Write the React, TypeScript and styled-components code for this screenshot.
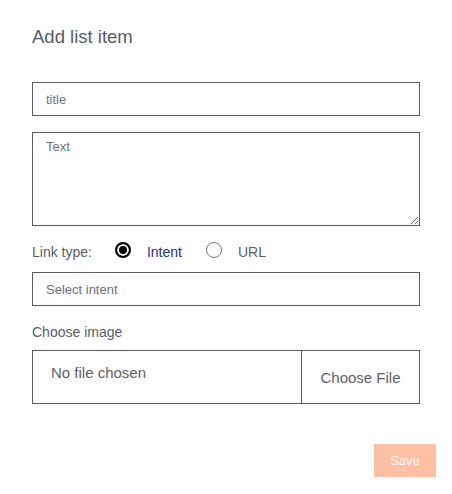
import React, { useState } from 'react';
import styled, { createGlobalStyle } from 'styled-components';

const GlobalStyle = createGlobalStyle`
  html, body {
    margin: 0;
    padding: 0;
    background: #ffffff;
    font-family: "Liberation Sans", Arial, sans-serif;
  }
  * {
    box-sizing: border-box;
  }
`;

const Page = styled.div`
  width: 452px;
  min-height: 494px;
  padding: 26px 16px 0 32px;
`;

const Form = styled.div`
  width: 388px;
  display: flex;
  flex-direction: column;
`;

const Title = styled.h2`
  margin: 0 0 34px;
  font-size: 18.5px;
  line-height: 22px;
  font-weight: 400;
  color: #575b66;
`;

const TextInput = styled.input`
  width: 100%;
  height: 34px;
  padding: 0 13px;
  border: 1px solid #5a5d66;
  border-radius: 0;
  font-family: inherit;
  font-size: 13px;
  color: #333;
  outline: none;

  &::placeholder {
    color: #6f727a;
  }
`;

const TextArea = styled.textarea`
  width: 100%;
  height: 94px;
  margin-top: 16px;
  padding: 6px 13px;
  border: 1px solid #5a5d66;
  border-radius: 0;
  font-family: inherit;
  font-size: 13px;
  line-height: 15px;
  color: #333;
  resize: vertical;
  outline: none;
  display: block;

  &::placeholder {
    color: #6f727a;
  }
`;

const LinkRow = styled.div`
  display: flex;
  align-items: center;
  height: 24px;
  margin: 14px 0 8px;
  font-size: 14px;
  color: #5a5d66;
`;

const RowLabel = styled.span`
  margin-right: 23px;
`;

const RadioOption = styled.label`
  display: flex;
  align-items: center;
  gap: 16px;
  margin-right: 24px;
  cursor: pointer;
`;

const RadioDot = styled.input.attrs({ type: 'radio' })`
  appearance: none;
  margin: 0 0 4px;
  width: 16px;
  height: 16px;
  border-radius: 50%;
  border: 1px solid #767676;
  background: #fff;
  cursor: pointer;

  &:checked {
    border: 2px solid #000;
    box-shadow: inset 0 0 0 2px #fff;
    background: #000;
  }
`;

const RadioText = styled.span<{ $active: boolean }>`
  color: ${({ $active }) => ($active ? '#27307a' : '#5a5d66')};
`;

const FieldLabel = styled.div`
  margin: 18px 0 9px;
  font-size: 14px;
  line-height: 17px;
  color: #5a5d66;
`;

const FileBox = styled.div`
  display: flex;
  height: 54px;
  border: 1px solid #5a5d66;
`;

const FileName = styled.div`
  flex: 1;
  padding: 13px 18px 0;
  font-size: 15px;
  line-height: 18px;
  color: #5e6169;
`;

const FileButton = styled.label`
  width: 118px;
  display: flex;
  align-items: center;
  justify-content: center;
  border-left: 1px solid #5a5d66;
  font-size: 15px;
  color: #5e6169;
  cursor: pointer;
`;

const HiddenFile = styled.input`
  display: none;
`;

const Footer = styled.div`
  display: flex;
  justify-content: flex-end;
  margin-top: 40px;
  margin-right: -16px;
`;

const SaveButton = styled.button`
  width: 62px;
  height: 33px;
  border: none;
  border-radius: 0;
  background: #fdc0a4;
  color: #fff6f2;
  font-family: inherit;
  font-size: 13px;
  cursor: pointer;
`;

export default function App() {
  const [linkType, setLinkType] = useState<'intent' | 'url'>('intent');
  const [fileName, setFileName] = useState<string | null>(null);

  return (
    <>
      <GlobalStyle />
      <Page>
        <Form>
          <Title>Add list item</Title>
          <TextInput placeholder="title" />
          <TextArea placeholder="Text" />
          <LinkRow>
            <RowLabel>Link type:</RowLabel>
            <RadioOption>
              <RadioDot
                name="linkType"
                checked={linkType === 'intent'}
                onChange={() => setLinkType('intent')}
              />
              <RadioText $active={linkType === 'intent'}>Intent</RadioText>
            </RadioOption>
            <RadioOption>
              <RadioDot
                name="linkType"
                checked={linkType === 'url'}
                onChange={() => setLinkType('url')}
              />
              <RadioText $active={linkType === 'url'}>URL</RadioText>
            </RadioOption>
          </LinkRow>
          <TextInput placeholder={linkType === 'intent' ? 'Select intent' : 'URL'} />
          <FieldLabel>Choose image</FieldLabel>
          <FileBox>
            <FileName>{fileName ?? 'No file chosen'}</FileName>
            <FileButton>
              Choose File
              <HiddenFile
                type="file"
                accept="image/*"
                onChange={(e) => setFileName(e.target.files?.[0]?.name ?? null)}
              />
            </FileButton>
          </FileBox>
          <Footer>
            <SaveButton disabled={!fileName}>Save</SaveButton>
          </Footer>
        </Form>
      </Page>
    </>
  );
}
